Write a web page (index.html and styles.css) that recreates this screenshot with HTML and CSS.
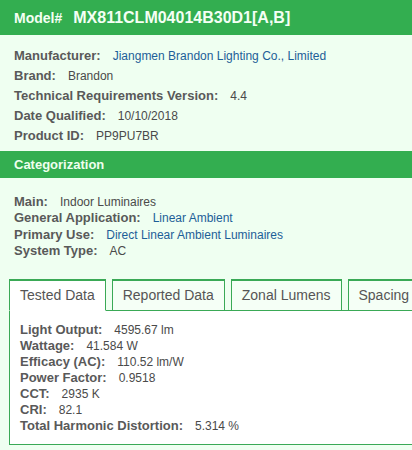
FILE: index.html
```html
<!DOCTYPE html>
<html lang="en">
<head>
<meta charset="utf-8">
<title>Model MX811CLM04014B30D1[A,B]</title>
<link rel="stylesheet" href="styles.css">
</head>
<body>
<div class="page">
  <header class="model-bar">
    <span class="model-label">Model#</span>
    <span class="model-number">MX811CLM04014B30D1[A,B]</span>
  </header>

  <section class="info">
    <div class="row"><span class="lbl">Manufacturer:</span><a class="val link" href="#">Jiangmen Brandon Lighting Co., Limited</a></div>
    <div class="row"><span class="lbl">Brand:</span><span class="val">Brandon</span></div>
    <div class="row"><span class="lbl">Technical Requirements Version:</span><span class="val">4.4</span></div>
    <div class="row"><span class="lbl">Date Qualified:</span><span class="val">10/10/2018</span></div>
    <div class="row"><span class="lbl">Product ID:</span><span class="val">PP9PU7BR</span></div>
  </section>

  <h2 class="section-bar">Categorization</h2>

  <section class="categ">
    <div class="row"><span class="lbl">Main:</span><span class="val">Indoor Luminaires</span></div>
    <div class="row"><span class="lbl">General Application:</span><a class="val link" href="#">Linear Ambient</a></div>
    <div class="row"><span class="lbl">Primary Use:</span><a class="val link" href="#">Direct Linear Ambient Luminaires</a></div>
    <div class="row"><span class="lbl">System Type:</span><span class="val">AC</span></div>
  </section>

  <div class="tabs-wrap">
    <nav class="tabs">
      <span class="tab active">Tested Data</span>
      <span class="tab">Reported Data</span>
      <span class="tab">Zonal Lumens</span>
      <span class="tab">Spacing</span>
    </nav>
    <div class="panel">
      <div class="row"><span class="lbl">Light Output:</span><span class="val">4595.67 lm</span></div>
      <div class="row"><span class="lbl">Wattage:</span><span class="val">41.584 W</span></div>
      <div class="row"><span class="lbl">Efficacy (AC):</span><span class="val">110.52 lm/W</span></div>
      <div class="row"><span class="lbl">Power Factor:</span><span class="val">0.9518</span></div>
      <div class="row"><span class="lbl">CCT:</span><span class="val">2935 K</span></div>
      <div class="row"><span class="lbl">CRI:</span><span class="val">82.1</span></div>
      <div class="row"><span class="lbl">Total Harmonic Distortion:</span><span class="val">5.314 %</span></div>
    </div>
  </div>
</div>
</body>
</html>
```

FILE: styles.css
```css
html, body {
  margin: 0;
  padding: 0;
  overflow: hidden;
  background: #effff1;
}
body {
  font-family: "Liberation Sans", Arial, sans-serif;
  color: #555;
}
.page {
  width: 412px;
  height: 450px;
  overflow: hidden;
}
.model-bar {
  height: 35px;
  background: #33ae50;
  display: flex;
  align-items: center;
  padding: 0 14px;
  color: #f4fff4;
  font-weight: bold;
}
.model-label {
  font-size: 14px;
  margin-right: 11px;
}
.model-number {
  font-size: 16px;
}
.row {
  display: flex;
  align-items: baseline;
  white-space: nowrap;
}
.lbl {
  font-weight: bold;
  font-size: 13px;
  color: #595959;
  margin-right: 12px;
}
.val {
  font-size: 12px;
  color: #4a4a4a;
}
.link {
  color: #1d5e98;
  text-decoration: none;
}
.info {
  padding: 11px 14px 0;
  height: 105px;
}
.info .row {
  line-height: 19px;
}
.section-bar {
  margin: 0;
  height: 27px;
  background: #33ae50;
  color: #eeffee;
  font-size: 13px;
  font-weight: bold;
  display: flex;
  align-items: center;
  padding: 0 14px;
}
.categ {
  padding: 16px 14px 0;
  height: 85px;
}
.categ .row {
  line-height: 16.3px;
}
.tabs-wrap {
  margin-left: 9px;
  width: 420px;
}
.tabs {
  display: flex;
  gap: 6px;
  white-space: nowrap;
  position: relative;
  z-index: 1;
}
.tab {
  flex: none;
  height: 29px;
  line-height: 29px;
  padding: 0 10px;
  font-size: 14px;
  color: #555;
  border: 1.5px solid #3aa956;
  border-top-width: 2px;
  background: #f5fff6;
}
.tab.active {
  background: #ffffff;
  border-bottom-color: #ffffff;
}
.panel {
  margin-top: -1.5px;
  background: #ffffff;
  border: 1.5px solid #3aa956;
  padding: 11px 10px 10px;
}
.panel .row {
  line-height: 16px;
}
```
